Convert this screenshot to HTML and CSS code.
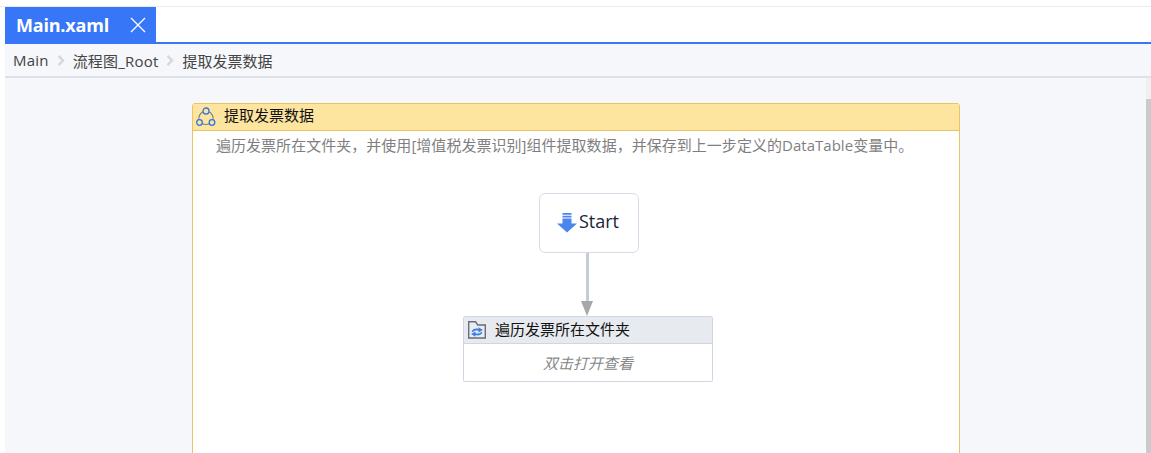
FILE: index.html
```html
<!DOCTYPE html>
<html lang="zh-CN">
<head>
<meta charset="utf-8">
<title>Main.xaml</title>
<link rel="stylesheet" href="styles.css">
</head>
<body>
<div class="app">
  <div class="top-strip"></div>
  <div class="tabbar">
    <div class="tab">
      <span class="tab-title">Main.xaml</span>
      <svg class="tab-close" width="16" height="16" viewBox="0 0 16 16"><path d="M1 1 15 15M15 1 1 15" stroke="#fff" stroke-width="1.3" fill="none"/></svg>
    </div>
  </div>
  <div class="breadcrumb">
    <span class="crumb-wide">Main</span>
    <svg class="crumb-sep" width="8" height="11" viewBox="0 0 8 11"><path d="M1.500 .8 6 5.500 1.500 10.200" stroke="#d3d8e2" stroke-width="2.400" fill="none"/></svg>
    <span class="crumb-wide">流程图_Root</span>
    <svg class="crumb-sep" width="8" height="11" viewBox="0 0 8 11"><path d="M1.500 .8 6 5.500 1.500 10.200" stroke="#d3d8e2" stroke-width="2.400" fill="none"/></svg>
    <span>提取发票数据</span>
  </div>
  <div class="workspace">
    <div class="canvas">
      <section class="group">
        <header class="group-head">
          <svg class="group-icon" width="20" height="20" viewBox="0 0 20 20">
            <path d="M7.500 4.500C4 6.500 2.400 10 3 13M12.500 4.500C16 6.500 17.600 10 17 13M6 16.600C8 17.600 12 17.600 14 16.600" stroke="#7d8087" stroke-width="1.200" fill="none"/>
            <circle cx="10" cy="4" r="3" fill="#fde49f" stroke="#2e77e6" stroke-width="1.300"/>
            <circle cx="3.500" cy="15.500" r="2.800" fill="#fde49f" stroke="#2e77e6" stroke-width="1.300"/>
            <circle cx="16" cy="15.500" r="2.800" fill="#fde49f" stroke="#2e77e6" stroke-width="1.300"/>
          </svg>
          <span class="group-title">提取发票数据</span>
        </header>
        <p class="group-desc">遍历发票所在文件夹，并使用[增值税发票识别]组件提取数据，并保存到上一步定义的DataTable变量中。</p>
        <div class="flow">
          <div class="start">
            <svg class="start-icon" width="20" height="20" viewBox="0 0 20 20">
              <path d="M5.500 0h9v1.700h-9zM5.500 2.800h9v1.700h-9zM5.500 5.600h9v4.900H20L10 19.500 0 10.500h5.500z" fill="#4a86ee"/>
            </svg>
            <span class="start-label">Start</span>
          </div>
          <div class="connector"><div class="line"></div><div class="arrow"></div></div>
          <div class="activity">
            <div class="activity-head">
              <svg class="activity-icon" width="18" height="18" viewBox="0 0 18 18">
                <path d="M.7 .8h7l2 3.200h7.600v13H.7z" fill="#e9edf3" stroke="#666c78" stroke-width="1.400"/>
                <path d="M3.500 10.500C4.500 8 8 6.800 10.500 8V6.300L15 9l-4.500 2.500V9.800C8.500 9 6 9.500 5 11zM14.500 11.500c-1 2.500-4.500 3.700-7 2.500v1.700L3 13l4.500-2.500v1.700c2 .8 4.500.3 5.500-1.200z" fill="#3f7fe6"/>
              </svg>
              <span class="activity-title">遍历发票所在文件夹</span>
            </div>
            <div class="activity-body">双击打开查看</div>
          </div>
        </div>
      </section>
    </div>
    <div class="scrollbar"><div class="scroll-thumb"></div></div>
  </div>
</div>
</body>
</html>
```
FILE: styles.css
```css
* { box-sizing: border-box; }
html, body { margin: 0; height: 100%; overflow: hidden; background: #fff; }
body { font-family: "Open Sans", "Noto Sans CJK SC", sans-serif; color: #333; }
.app { height: 453px; display: flex; flex-direction: column; padding-left: 5px; overflow: hidden; }
.top-strip { height: 7px; margin-left: -5px; border-bottom: 1px solid #e9ebf2; flex: none; }
.tabbar { height: 37px; flex: none; background: #fff; border-bottom: 2px solid #3776f6; }
.tab { width: 151px; height: 35px; background: #3776f6; color: #fff; display: flex; align-items: center; padding-left: 11px; }
.tab-title { font-size: 18px; font-weight: 700; letter-spacing: -0.2px; line-height: 24px; }
.tab-close { margin-left: 21px; flex: none; }
.breadcrumb { height: 34px; flex: none; background: #f5f7fb; border-bottom: 2px solid #dde1ea; display: flex; align-items: center; padding-left: 8px; font-size: 15px; color: #444; }
.crumb-wide { letter-spacing: 0.2px; }
.crumb-sep { margin: 0 8px; flex: none; }
.workspace { flex: 1; min-height: 0; display: flex; background: #f5f7fb; overflow: hidden; }
.canvas { flex: 1; padding: 25px 0 0 187px; min-width: 0; }
.group { width: 768px; height: 420px; background: #fff; border: 1px solid #e8c463; border-radius: 3px 3px 0 0; }
.group-head { height: 27px; background: #fde49f; border-bottom: 1px solid #e8c463; display: flex; align-items: center; padding-left: 3px; font-size: 15px; color: #111; }
.group-icon { margin-right: 8px; flex: none; }
.group-title { line-height: 20px; margin-top: -4px; }
.group-desc { margin: 4px 0 0 23px; font-size: 15px; line-height: 20px; color: #7f7f7f; white-space: nowrap; letter-spacing: 0.03px; }
.flow { display: flex; flex-direction: column; align-items: center; padding: 38px 0 0 24px; }
.start { width: 100px; height: 60px; margin-left: 2px; padding-right: 2px; background: #fff; border: 1px solid #d7dde8; border-radius: 6px; display: flex; align-items: center; justify-content: center; gap: 2px; font-size: 18px; color: #1a2433; }
.start-icon { flex: none; }
.start-label { line-height: 24px; margin-top: -4px; }
.connector { height: 63px; margin-right: 2px; display: flex; flex-direction: column; align-items: center; }
.line { width: 3px; height: 48px; background: #c6ccd6; }
.arrow { width: 0; height: 0; border-left: 6px solid transparent; border-right: 6px solid transparent; border-top: 15px solid #a8a8a8; }
.activity { width: 250px; height: 66px; background: #fff; border: 1px solid #d0d5e2; border-radius: 2px; }
.activity-head { height: 27px; background: #e7eaee; border-bottom: 1px solid #d0d5e2; display: flex; align-items: center; padding-left: 4px; font-size: 15px; color: #111; }
.activity-icon { margin-right: 9px; flex: none; }
.activity-title { line-height: 20px; margin-top: -3px; }
.activity-body { height: 37px; display: flex; align-items: center; justify-content: center; font-size: 15px; font-style: italic; color: #888; }
.scrollbar { width: 5px; flex: none; background: #f0f0f0; padding-top: 21px; }
.scroll-thumb { height: 100%; background: #cbcbcb; }
```
